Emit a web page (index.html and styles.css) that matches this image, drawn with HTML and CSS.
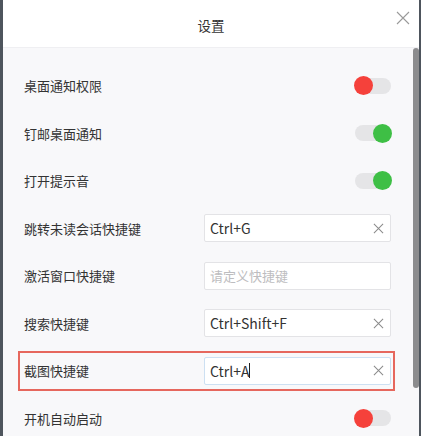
FILE: index.html
```html
<!DOCTYPE html>
<html lang="zh-CN">
	<head>
		<meta charset="UTF-8">
		<title>设置</title>
		<meta name="viewport" content="width=device-width, initial-scale=1">
		<link rel="stylesheet" href="styles.css">
	</head>
	<body>
		<main class="dialog">
			<header class="dialog-head">
				<span class="dialog-title">设置</span>
				<svg class="close" xmlns="http://www.w3.org/2000/svg" viewBox="0 0 14 14" width="14" height="14">
					<path d="M1 1 L13 13 M13 1 L1 13" stroke="#9a9a9a" stroke-width="1.1" fill="none"/>
				</svg>
			</header>
			<div class="dialog-body">
				<div class="settings">
					<div class="row">
						<span class="label">桌面通知权限</span>
						<span class="switch off"><i class="knob"></i></span>
					</div>
					<div class="row">
						<span class="label">钉邮桌面通知</span>
						<span class="switch on"><i class="knob"></i></span>
					</div>
					<div class="row">
						<span class="label">打开提示音</span>
						<span class="switch on"><i class="knob"></i></span>
					</div>
					<div class="row">
						<span class="label">跳转未读会话快捷键</span>
						<div class="hotkey">
							<span class="value">Ctrl+G</span>
							<svg class="clear" xmlns="http://www.w3.org/2000/svg" viewBox="0 0 12 12" width="12" height="12"><path d="M1 1 L11 11 M11 1 L1 11" stroke="#8a8a8a" stroke-width="1.1" fill="none"/></svg>
						</div>
					</div>
					<div class="row">
						<span class="label">激活窗口快捷键</span>
						<div class="hotkey">
							<span class="value placeholder">请定义快捷键</span>
						</div>
					</div>
					<div class="row">
						<span class="label">搜索快捷键</span>
						<div class="hotkey">
							<span class="value">Ctrl+Shift+F</span>
							<svg class="clear" xmlns="http://www.w3.org/2000/svg" viewBox="0 0 12 12" width="12" height="12"><path d="M1 1 L11 11 M11 1 L1 11" stroke="#8a8a8a" stroke-width="1.1" fill="none"/></svg>
						</div>
					</div>
					<div class="row marked">
						<span class="label">截图快捷键</span>
						<div class="hotkey focused">
							<span class="value">Ctrl+A<i class="caret"></i></span>
							<svg class="clear" xmlns="http://www.w3.org/2000/svg" viewBox="0 0 12 12" width="12" height="12"><path d="M1 1 L11 11 M11 1 L1 11" stroke="#8a8a8a" stroke-width="1.1" fill="none"/></svg>
						</div>
					</div>
					<div class="row">
						<span class="label">开机自动启动</span>
						<span class="switch off"><i class="knob"></i></span>
					</div>
				</div>
				<div class="scrollbar"><div class="thumb"></div></div>
			</div>
		</main>
	</body>
</html>
```

FILE: styles.css
```css
html, body {
	margin: 0;
	padding: 0;
	height: 100%;
	font-size: 13px;
	font-family: "Noto Sans CJK SC", "Noto Sans", sans-serif;
	color: #333;
}

body {
	background-color: #4e555d;
	overflow: hidden;
}

.dialog {
	margin-left: 3px;
	width: 416px;
	height: 436px;
	display: flex;
	flex-direction: column;
	background-color: #f8f8fa;
}

.dialog-head {
	height: 47px;
	flex: none;
	background-color: #fff;
	border-bottom: 1px solid #efeff2;
	display: flex;
	align-items: center;
	justify-content: center;
	position: relative;
}

.dialog-title {
	font-size: 13.5px;
	margin-top: 2px;
}

.close {
	position: absolute;
	right: 9px;
	top: 11px;
}

.dialog-body {
	flex: 1;
	display: flex;
	min-height: 0;
}

.settings {
	flex: 1;
	padding-top: 14px;
	overflow: hidden;
}

.row {
	height: 47.5px;
	padding: 0 22px 0 21px;
	display: flex;
	align-items: center;
	justify-content: space-between;
	box-sizing: border-box;
}

.row.marked {
	height: 40px;
	margin: 3.75px 18px 3.75px 15px;
	padding: 0 2px 0 4px;
	border: 2px solid #e6675d;
}

.label {
	line-height: 1;
}

.switch {
	width: 36px;
	height: 16px;
	border-radius: 8px;
	background-color: #e5e5e7;
	display: flex;
	align-items: center;
}

.switch.on {
	justify-content: flex-end;
}

.knob {
	width: 19px;
	height: 19px;
	border-radius: 50%;
	flex: none;
}

.switch.off .knob {
	background-color: #f5413b;
	margin-left: -1px;
}

.switch.on .knob {
	background-color: #3ebf45;
	margin-right: -1px;
}

.hotkey {
	width: 187px;
	height: 28px;
	box-sizing: border-box;
	border: 1px solid #e3e3e6;
	border-radius: 2px;
	background-color: #fff;
	display: flex;
	align-items: center;
	justify-content: space-between;
	padding: 0 6px 0 5px;
}

.hotkey.focused {
	border-color: #cde0f2;
}

.value {
	font-size: 14px;
	display: flex;
	align-items: center;
}

.placeholder {
	color: #bdbdc0;
	font-size: 13px;
}

.caret {
	width: 1px;
	height: 15px;
	background-color: #222;
}

.clear {
	width: 11px;
	height: 11px;
}

.scrollbar {
	width: 6px;
	flex: none;
}

.thumb {
	height: 340px;
	background-color: #8c8c8e;
	border-radius: 3px;
}
```
